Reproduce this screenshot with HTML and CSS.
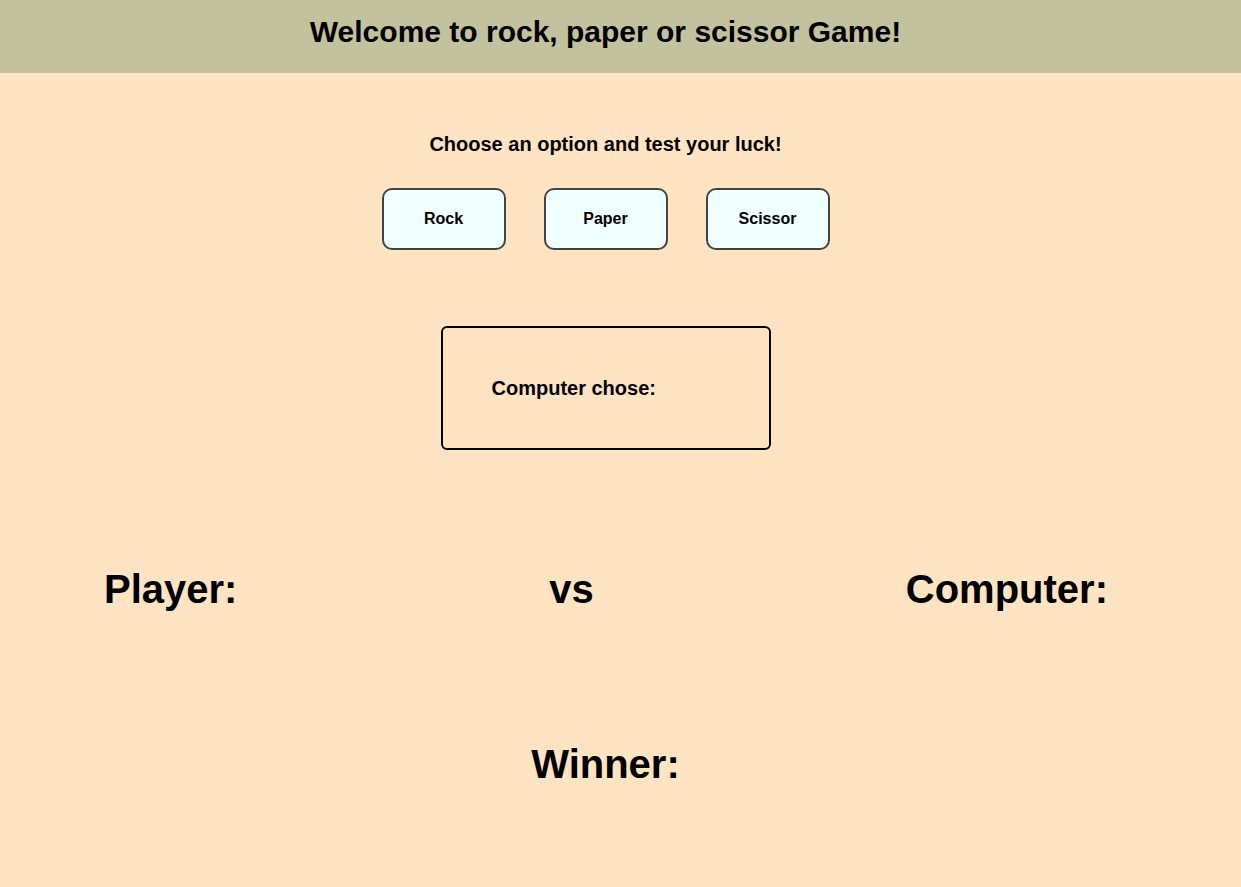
FILE: index.html
```html
<!DOCTYPE html>
<html>
<head>
<meta charset="utf-8">
<title>Rock Paper Scissor</title>
<link rel="stylesheet" href="styles.css">
</head>
<body>
<div class="page">
  <header class="header">
    <h1 class="title">Welcome to rock, paper or scissor Game!</h1>
  </header>
  <main class="main">
    <p class="prompt">Choose an option and test your luck!</p>
    <div class="choices">
      <button class="choice">Rock</button>
      <button class="choice">Paper</button>
      <button class="choice">Scissor</button>
    </div>
    <div class="result-box">
      <span class="result-label">Computer chose:</span>
    </div>
    <div class="versus">
      <h2 class="big">Player:</h2>
      <h2 class="big">vs</h2>
      <h2 class="big">Computer:</h2>
    </div>
    <h2 class="big winner">Winner:</h2>
  </main>
</div>
</body>
</html>
```
FILE: styles.css
```css
html, body {
  margin: 0;
  padding: 0;
  background: #ffe4c4;
  font-family: "Liberation Sans", Arial, sans-serif;
  color: #000;
}
.page {
  width: 1211px;
}
.header {
  background: #c2c39e;
  height: 73px;
  box-sizing: border-box;
  padding-top: 14px;
  width: 1241px;
}
.title {
  width: 1211px;
  margin: 0;
  font-size: 30px;
  line-height: 35px;
  font-weight: bold;
  text-align: center;
}
.main {
  display: flex;
  flex-direction: column;
  align-items: center;
}
.prompt {
  margin: 60px 0 0;
  font-size: 20px;
  line-height: 23px;
  font-weight: bold;
}
.choices {
  display: flex;
  gap: 38px;
  margin-top: 32px;
}
.choice {
  width: 124px;
  height: 62px;
  box-sizing: border-box;
  background: #f0ffff;
  border: 2px solid #444;
  border-radius: 10px;
  font-family: "Liberation Sans", Arial, sans-serif;
  font-size: 16px;
  font-weight: bold;
  color: #000;
  padding: 0;
}
.result-box {
  margin-top: 76px;
  width: 330px;
  height: 124px;
  box-sizing: border-box;
  border: 2px solid #000;
  border-radius: 6px;
  display: flex;
  align-items: center;
  padding-left: 49px;
}
.result-label {
  font-size: 20px;
  font-weight: bold;
  line-height: 23px;
}
.versus {
  align-self: stretch;
  display: flex;
  justify-content: space-between;
  padding: 0 103px 0 104px;
  margin-top: 116px;
}
.big {
  margin: 0;
  font-size: 40px;
  line-height: 46px;
  font-weight: bold;
}
.winner {
  margin-top: 129px;
}
```
